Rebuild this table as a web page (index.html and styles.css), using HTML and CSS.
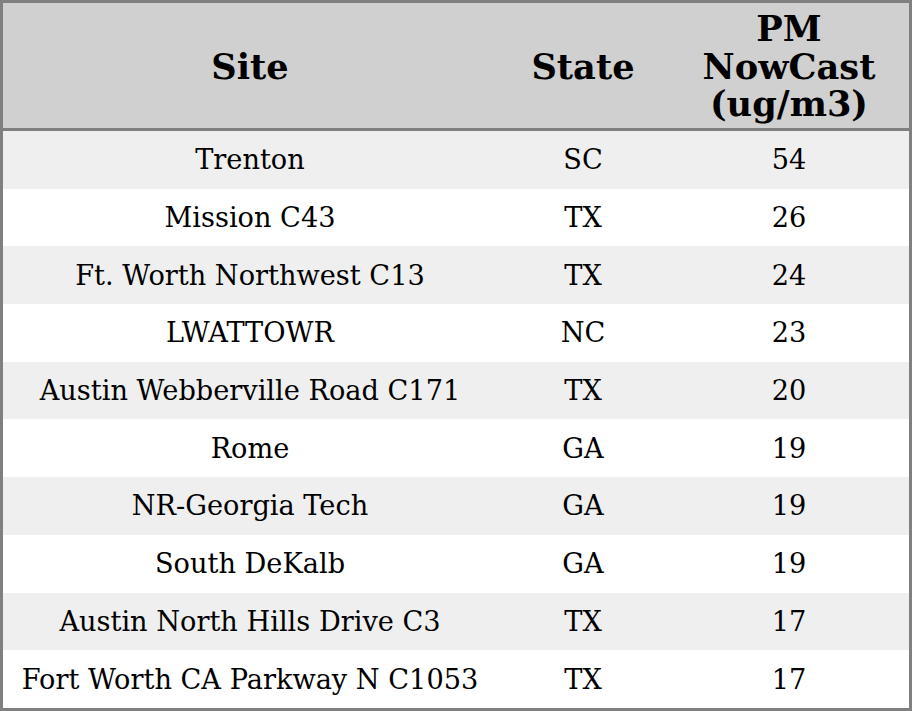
FILE: index.html
```html
<!DOCTYPE html>
<html>
<head>
<meta charset="utf-8">
<link rel="stylesheet" href="styles.css">
</head>
<body>
<table class="aq-table">
  <colgroup>
    <col class="col-site">
    <col class="col-state">
    <col class="col-pm">
  </colgroup>
  <thead>
    <tr><th>Site</th><th>State</th><th>PM<br>NowCast<br>(ug/m3)</th></tr>
  </thead>
  <tbody>
    <tr><td>Trenton</td><td>SC</td><td>54</td></tr>
    <tr><td>Mission C43</td><td>TX</td><td>26</td></tr>
    <tr><td>Ft. Worth Northwest C13</td><td>TX</td><td>24</td></tr>
    <tr><td>LWATTOWR</td><td>NC</td><td>23</td></tr>
    <tr><td>Austin Webberville Road C171</td><td>TX</td><td>20</td></tr>
    <tr><td>Rome</td><td>GA</td><td>19</td></tr>
    <tr><td>NR-Georgia Tech</td><td>GA</td><td>19</td></tr>
    <tr><td>South DeKalb</td><td>GA</td><td>19</td></tr>
    <tr><td>Austin North Hills Drive C3</td><td>TX</td><td>17</td></tr>
    <tr><td>Fort Worth CA Parkway N C1053</td><td>TX</td><td>17</td></tr>
  </tbody>
</table>
</body>
</html>
```
FILE: styles.css
```css
html, body {
  margin: 0;
  padding: 0;
  background: #ffffff;
}
.aq-table {
  width: 912px;
  border-collapse: separate;
  border-spacing: 0;
  border: 3px solid #808080;
  font-family: "DejaVu Serif", serif;
  color: #000;
  table-layout: fixed;
}
.col-site { width: 494px; }
.col-state { width: 172px; }
.col-pm { width: 240px; }
.aq-table th {
  background: #d0d0d0;
  font-size: 35.2px;
  font-weight: bold;
  line-height: 37.5px;
  padding: 7px 0 5.5px;
  text-align: center;
  border-bottom: 3px solid #808080;
}
.aq-table td {
  font-size: 27.2px;
  line-height: 31px;
  padding: 13.35px 0;
  text-align: center;
}
.aq-table tbody tr:nth-child(odd) td {
  background: #efefef;
}
```
